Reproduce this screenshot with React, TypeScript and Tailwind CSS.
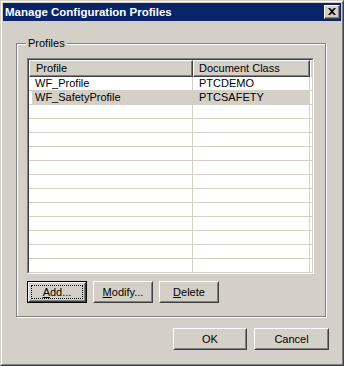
import React from "react";

const font = { fontFamily: '"Liberation Sans", Arial, sans-serif' };

function Btn({
  label,
  under,
  w,
  isDefault,
}: {
  label: string;
  under?: number;
  w: string;
  isDefault?: boolean;
}) {
  const text =
    under === undefined ? (
      label
    ) : (
      <>
        {label.slice(0, under)}
        <span className="underline underline-offset-[1px]">{label[under]}</span>
        {label.slice(under + 1)}
      </>
    );
  const face = (
    <div className="flex h-full w-full border border-t-white border-l-white border-r-[#404040] border-b-[#404040]">
      <div className="relative flex h-full w-full items-center justify-center border border-t-[#d4d0c8] border-l-[#d4d0c8] border-r-[#808080] border-b-[#808080] text-[11px] leading-none text-black">
        {text}
        {isDefault && (
          <div className="absolute inset-[1px] border border-dotted border-black" />
        )}
      </div>
    </div>
  );
  return (
    <div className={`h-[22px] ${w} ${isDefault ? "border border-black" : ""}`}>
      {face}
    </div>
  );
}

const rows = [
  ["WF_Profile", "PTCDEMO", false],
  ["WF_SafetyProfile", "PTCSAFETY", true],
  ...Array.from({ length: 12 }, () => ["", "", false]),
] as [string, string, boolean][];

export default function App() {
  return (
    <div
      className="h-[366px] w-[344px] border border-t-[#d4d0c8] border-l-[#d4d0c8] border-r-[#404040] border-b-[#404040] bg-[#d4d0c8]"
      style={font}
    >
      <div className="flex h-full flex-col border border-t-white border-l-white border-r-[#808080] border-b-[#808080] p-px">
        {/* title bar */}
        <div className="flex h-[18px] items-center justify-between bg-[#0a246a] pl-[2px] pr-[1px]">
          <span className="text-[11.5px] font-bold leading-[18px] text-white">
            Manage Configuration Profiles
          </span>
          <div className="h-[14px] w-[16px] border border-t-white border-l-white border-r-[#404040] border-b-[#404040] bg-[#d4d0c8]">
            <div className="flex h-full w-full items-center justify-center border-r border-b border-[#808080]">
              <svg width="8" height="7" viewBox="0 0 8 7">
                <path d="M0 0h2l2 2 2-2h2L5 3.5 8 7H6L4 5 2 7H0l3-3.5z" fill="black" />
              </svg>
            </div>
          </div>
        </div>

        {/* group box */}
        <div className="relative ml-[13px] mt-[22px] w-[310px] border border-[#808080] px-[10px] pt-[14px] pb-[13px] shadow-[1px_1px_0_white,inset_1px_1px_0_white]">
          <span className="absolute left-[9px] top-[-8px] bg-[#d4d0c8] px-[2px] text-[11px] leading-[14px] text-black">
            Profiles
          </span>

          {/* list view */}
          <div className="h-[216px] w-[287px] border border-t-[#808080] border-l-[#808080] border-r-white border-b-white">
            <div className="flex h-full flex-col overflow-hidden border border-t-[#404040] border-l-[#404040] border-r-[#d4d0c8] border-b-[#d4d0c8] bg-white">
              <div className="flex h-[17px] shrink-0 text-[11px] text-black">
                <div className="flex w-[164px] items-center border border-t-white border-l-white border-r-[#404040] border-b-[#404040] bg-[#d4d0c8]">
                  <div className="flex h-full w-full items-center border-r border-b border-[#808080] pl-[6px]">
                    Profile
                  </div>
                </div>
                <div className="flex w-[117px] items-center border border-t-white border-l-white border-r-[#404040] border-b-[#404040] bg-[#d4d0c8]">
                  <div className="flex h-full w-full items-center border-r border-b border-[#808080] pl-[5px]">
                    Document Class
                  </div>
                </div>
                <div className="flex-1 border-t border-l border-white bg-[#d4d0c8]" />
              </div>
              {rows.map(([a, b, sel], i) => (
                <div key={i} className="flex h-[14px] shrink-0 text-[11px] leading-[13px] text-black">
                  <div
                    className={`w-[164px] border-r border-b border-[#d4d0c8] pl-[6px] ${
                      sel ? "bg-[#d4d0c8] shadow-[inset_3px_0_0_white]" : ""
                    }`}
                  >
                    {a}
                  </div>
                  <div
                    className={`w-[117px] border-r border-b border-[#d4d0c8] pl-[6px] ${
                      sel ? "bg-[#d4d0c8]" : ""
                    }`}
                  >
                    {b}
                  </div>
                  <div className="flex-1 border-b border-[#d4d0c8]" />
                </div>
              ))}
            </div>
          </div>

          {/* action buttons */}
          <div className="mt-[7px] flex gap-[6px]">
            <Btn label="Add..." under={0} w="w-[60px]" isDefault />
            <Btn label="Modify..." under={0} w="w-[60px]" />
            <Btn label="Delete" under={0} w="w-[60px]" />
          </div>
        </div>

        {/* dialog buttons */}
        <div className="ml-[170px] mt-[11px] flex gap-[7px]">
          <Btn label="OK" w="w-[74px]" />
          <Btn label="Cancel" w="w-[75px]" />
        </div>
      </div>
    </div>
  );
}
